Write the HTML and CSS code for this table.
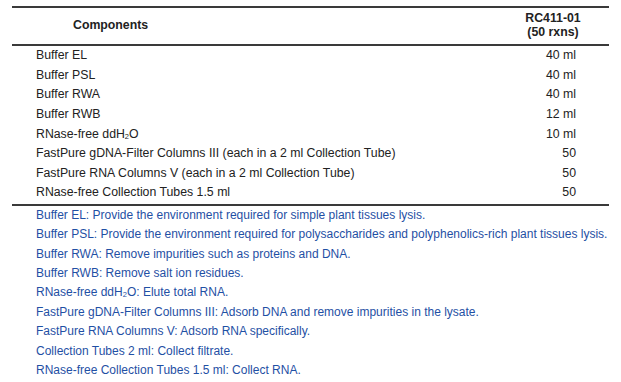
FILE: index.html
```html
<!DOCTYPE html>
<html lang="en">
<head>
  <meta charset="UTF-8">
  <title>Kit Components</title>
  <link rel="stylesheet" href="styles.css">
</head>
<body>
  <table class="kit">
    <tr>
      <th class="name">Components</th>
      <th class="qty">RC411-01<br>(50 rxns)</th>
    </tr>
    <tr><td>Buffer EL</td><td class="qty">40 ml</td></tr>
    <tr><td>Buffer PSL</td><td class="qty">40 ml</td></tr>
    <tr><td>Buffer RWA</td><td class="qty">40 ml</td></tr>
    <tr><td>Buffer RWB</td><td class="qty">12 ml</td></tr>
    <tr><td>RNase-free ddH<sub>2</sub>O</td><td class="qty">10 ml</td></tr>
    <tr><td>FastPure gDNA-Filter Columns III (each in a 2 ml Collection Tube)</td><td class="qty">50</td></tr>
    <tr><td>FastPure RNA Columns V (each in a 2 ml Collection Tube)</td><td class="qty">50</td></tr>
    <tr class="last"><td>RNase-free Collection Tubes 1.5 ml</td><td class="qty">50</td></tr>
  </table>

  <ul class="notes">
    <li>Buffer EL: Provide the environment required for simple plant tissues lysis.</li>
    <li>Buffer PSL: Provide the environment required for polysaccharides and polyphenolics-rich plant tissues lysis.</li>
    <li>Buffer RWA: Remove impurities such as proteins and DNA.</li>
    <li>Buffer RWB: Remove salt ion residues.</li>
    <li>RNase-free ddH<sub>2</sub>O: Elute total RNA.</li>
    <li>FastPure gDNA-Filter Columns III: Adsorb DNA and remove impurities in the lysate.</li>
    <li>FastPure RNA Columns V: Adsorb RNA specifically.</li>
    <li>Collection Tubes 2 ml: Collect filtrate.</li>
    <li>RNase-free Collection Tubes 1.5 ml: Collect RNA.</li>
  </ul>
</body>
</html>
```

FILE: styles.css
```css
body {
  font-family: "Liberation Sans", Arial, sans-serif;
  font-size: 12.3px;
  color: #222;
  background-color: #fff;
  margin: 0;
  padding: 6px 0 0 12px;
}
sub {
  font-size: 7.5px;
  vertical-align: -1px;
  line-height: 0;
}
.kit {
  width: 597px;
  border-collapse: collapse;
  border-top: 2px solid #3a3a3a;
  border-bottom: 2px solid #3a3a3a;
}
.kit th {
  font-weight: bold;
  line-height: 14px;
  padding: 3px 0 5px;
  border-bottom: 2px solid #3a3a3a;
  vertical-align: middle;
}
.kit th.name {
  text-align: left;
  padding-left: 61px;
}
.kit th.qty {
  width: 66px;
  text-align: center;
  padding-right: 23px;
}
.kit td {
  height: 19.6px;
  padding: 0 0 0 24px;
  line-height: 15px;
  white-space: nowrap;
}
.kit td.qty {
  text-align: right;
  padding-right: 33px;
}
.kit tr.last td {
  padding-bottom: 1px;
}
.notes {
  list-style: none;
  margin: 0;
  padding: 0 0 0 24px;
  font-size: 12px;
  color: #1f50a4;
}
.notes li {
  line-height: 19.4px;
  white-space: nowrap;
}
```
